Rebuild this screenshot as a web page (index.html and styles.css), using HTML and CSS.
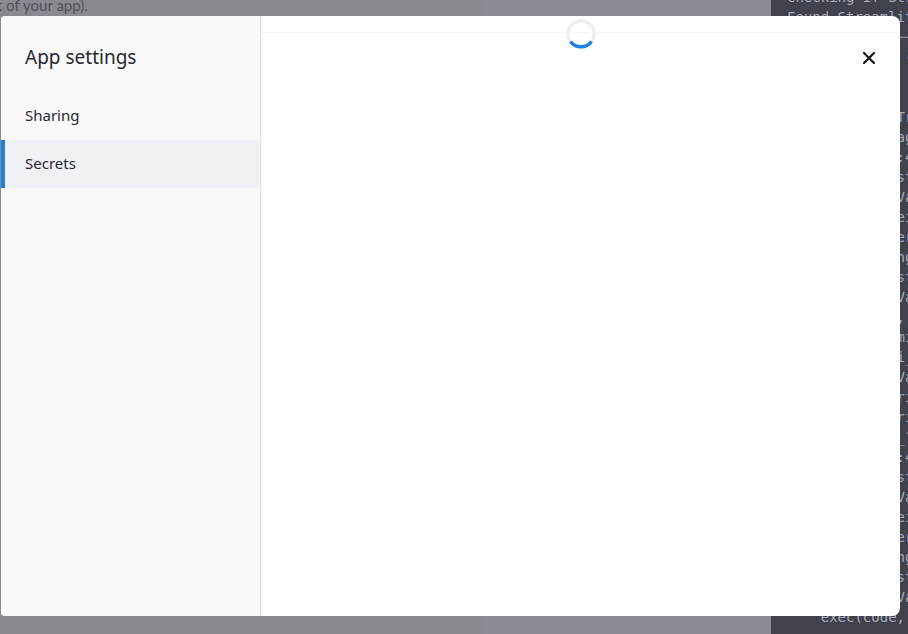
FILE: index.html
```html
<html>
	<head>
		<title>App settings</title>
<link rel="stylesheet" href="styles.css">
</head>
<body>
		<div id="PAGE">
			<div id="docPane"><span class="docText">t of your app).</span></div>
			<div id="midPane"></div>
			<div id="codePane">
				<div id="codeLines">
					<div class="codeLine">checking if Streamlit</div>
					<div class="codeLine">Found Streamlit 1.0</div>
					<div class="codeLine rule">──────────────────</div>
					<div class="codeLine">              (</div>
					<div class="codeLine"> </div>
					<div class="codeLine"> </div>
					<div class="codeLine">             Traceback</div>
					<div class="codeLine">             ageLoader</div>
					<div class="codeLine">             :453</div>
					<div class="codeLine">             st.write</div>
					<div class="codeLine">             Value</div>
					<div class="codeLine">             eirror</div>
					<div class="codeLine">             errno</div>
					<div class="codeLine">             ngine</div>
					<div class="codeLine">             st.write</div>
					<div class="codeLine">             Value</div>
					<div class="codeLine">             ,</div>
					<div class="codeLine">             mini</div>
					<div class="codeLine">             i_mod</div>
					<div class="codeLine">             Value</div>
					<div class="codeLine">             ri</div>
					<div class="codeLine">             ri</div>
					<div class="codeLine">             _?</div>
					<div class="codeLine">             :453</div>
					<div class="codeLine">             st.write</div>
					<div class="codeLine">             Value</div>
					<div class="codeLine">             eirror</div>
					<div class="codeLine">             errno</div>
					<div class="codeLine">             ngine</div>
					<div class="codeLine">             st.write</div>
					<div class="codeLine">             Value</div>
					<div class="codeLine">    exec(code, module</div>
					<div class="codeLine">      run</div>
				</div>
			</div>
		</div>

		<div id="MODAL">
			<div id="sidebar">
				<div id="modalTitle">App settings</div>
				<div class="navItem">Sharing</div>
				<div class="navItem active">Secrets</div>
			</div>
			<div id="content">
				<div id="topRule"></div>
				<svg id="spinner" viewBox="0 0 32 32">
					<circle cx="16" cy="16" r="13" fill="none" stroke="#f0f0f2" stroke-width="3.5"/>
					<path d="M5.5 23.5 A13 13 0 0 0 26.5 23.5" fill="none" stroke="#1c83e1" stroke-width="3.5"/>
				</svg>
				<svg id="closeBtn" viewBox="0 0 12 12">
					<path d="M1 1 L11 11 M11 1 L1 11" stroke="#111" stroke-width="2.2" stroke-linecap="square"/>
				</svg>
			</div>
		</div>
	</body>
</html>
```

FILE: styles.css
```css
body{
	margin: 0;
	width: 908px;
	height: 634px;
	overflow: hidden;
	background: #8a8a93;
	font-family: "Noto Sans", sans-serif;
}

#PAGE{
	display: flex;
	height: 634px;
}

#docPane{
	width: 483px;
	background: #8b8890;
	overflow: hidden;
}

.docText{
	display: block;
	margin-top: -4px;
	margin-left: -3px;
	font-family: Lato, sans-serif;
	font-size: 15px;
	color: #554f5a;
}

#midPane{
	width: 288px;
	background: #8a8b94;
}

#codePane{
	box-sizing: border-box;
	width: 137px;
	background: #40424d;
	padding-left: 16px;
	overflow: hidden;
	font-family: "DejaVu Sans Mono", monospace;
	font-size: 14px;
	color: #a9acbb;
}

#codeLines{
	margin-top: -13px;
}

.codeLine{
	height: 20px;
	line-height: 20px;
	white-space: pre;
}

.rule{
	color: #8b8e9c;
}

#MODAL{
	position: absolute;
	top: 16px;
	left: 1px;
	width: 899px;
	height: 600px;
	display: flex;
	background: #fff;
	border-radius: 4px 8px 8px 4px;
	overflow: hidden;
}

#sidebar{
	width: 259px;
	background: #fafafa;
	border-right: 1px solid #d9dde7;
}

#modalTitle{
	height: 76px;
	line-height: 82px;
	padding-left: 24px;
	font-size: 19px;
	color: #262730;
}

.navItem{
	height: 48px;
	line-height: 46px;
	padding-left: 24px;
	font-size: 15px;
	color: #262730;
}

.active{
	background: #f0f1f5;
	border-left: 4px solid #1c83e1;
	padding-left: 20px;
}

#content{
	flex: 1;
	position: relative;
}

#topRule{
	height: 16px;
	border-bottom: 1px solid #f6f6f7;
}

#spinner{
	position: absolute;
	left: 304px;
	top: 2px;
	width: 32px;
	height: 32px;
}

#closeBtn{
	position: absolute;
	left: 602px;
	top: 36px;
	width: 12px;
	height: 12px;
}
```
